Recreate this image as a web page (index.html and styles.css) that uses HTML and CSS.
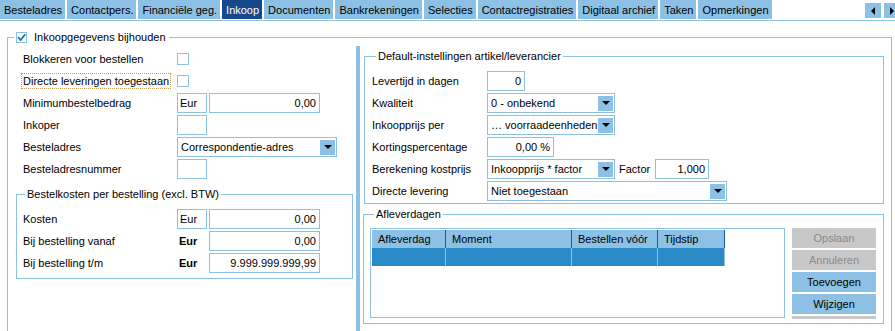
FILE: index.html
```html
<!DOCTYPE html>
<html>
<head>
  <title>Inkoop</title>
  <link rel="stylesheet" href="styles.css">
</head>
<body>

<div class="tabbar">
  <div class="tab">Besteladres</div>
  <div class="tab">Contactpers.</div>
  <div class="tab">Financiële geg.</div>
  <div class="tab active">Inkoop</div>
  <div class="tab">Documenten</div>
  <div class="tab">Bankrekeningen</div>
  <div class="tab">Selecties</div>
  <div class="tab">Contactregistraties</div>
  <div class="tab">Digitaal archief</div>
  <div class="tab">Taken</div>
  <div class="tab">Opmerkingen</div>
  <div class="tab-nav">
    <span class="nav-btn"><i class="tri-left"></i></span>
    <span class="nav-btn"><i class="tri-right"></i></span>
  </div>
</div>

<fieldset class="frame">
  <legend class="frame-title">
    <span class="check">
      <svg width="9" height="9" viewBox="0 0 9 9"><path d="M1 4.2 L3.6 7 L8.2 1.2" fill="none" stroke="#1f6fb5" stroke-width="1.8"/></svg>
    </span>
    Inkoopgegevens bijhouden
  </legend>

  <div class="panes">
    <div class="pane-left">
      <div class="form">
        <div class="row">
          <span class="label">Blokkeren voor bestellen</span>
          <span class="box"></span>
        </div>
        <div class="row">
          <span class="label"><span class="focus">Directe leveringen toegestaan</span></span>
          <span class="box"></span>
        </div>
        <div class="row">
          <span class="label">Minimumbestelbedrag</span>
          <div class="field cur">Eur</div>
          <div class="field num amount">0,00</div>
        </div>
        <div class="row">
          <span class="label">Inkoper</span>
          <div class="field cur"></div>
        </div>
        <div class="row">
          <span class="label">Besteladres</span>
          <div class="select w-160"><span class="select-text">Correspondentie-adres</span><span class="select-btn"><i class="tri-down"></i></span></div>
        </div>
        <div class="row">
          <span class="label">Besteladresnummer</span>
          <div class="field cur"></div>
        </div>
      </div>

      <fieldset class="group costs">
        <legend>Bestelkosten per bestelling (excl. BTW)</legend>
        <div class="form">
          <div class="row">
            <span class="label">Kosten</span>
            <div class="field cur">Eur</div>
            <div class="field num amount">0,00</div>
          </div>
          <div class="row">
            <span class="label">Bij bestelling vanaf</span>
            <span class="cur-bold">Eur</span>
            <div class="field num amount">0,00</div>
          </div>
          <div class="row">
            <span class="label">Bij bestelling t/m</span>
            <span class="cur-bold">Eur</span>
            <div class="field num amount">9.999.999.999,99</div>
          </div>
        </div>
      </fieldset>
    </div>

    <div class="splitter"></div>

    <div class="pane-right">
      <fieldset class="group defaults">
        <legend>Default-instellingen artikel/leverancier</legend>
        <div class="form">
          <div class="row">
            <span class="label">Levertijd in dagen</span>
            <div class="field num w-38">0</div>
          </div>
          <div class="row">
            <span class="label">Kwaliteit</span>
            <div class="select w-128"><span class="select-text">0 - onbekend</span><span class="select-btn"><i class="tri-down"></i></span></div>
          </div>
          <div class="row">
            <span class="label">Inkoopprijs per</span>
            <div class="select w-128"><span class="select-text">… voorraadeenheden</span><span class="select-btn"><i class="tri-down"></i></span></div>
          </div>
          <div class="row">
            <span class="label">Kortingspercentage</span>
            <div class="field num w-67">0,00 %</div>
          </div>
          <div class="row">
            <span class="label">Berekening kostprijs</span>
            <div class="select w-128"><span class="select-text">Inkoopprijs * factor</span><span class="select-btn"><i class="tri-down"></i></span></div>
            <span class="factor">Factor</span>
            <div class="field num w-54">1,000</div>
          </div>
          <div class="row">
            <span class="label">Directe levering</span>
            <div class="select w-240"><span class="select-text">Niet toegestaan</span><span class="select-btn"><i class="tri-down"></i></span></div>
          </div>
        </div>
      </fieldset>

      <fieldset class="group days">
        <legend>Afleverdagen</legend>
        <div class="days-body">
          <div class="grid">
            <div class="grid-head">
              <span class="c1">Afleverdag</span>
              <span class="c2">Moment</span>
              <span class="c3">Bestellen vóór</span>
              <span class="c4">Tijdstip</span>
            </div>
            <div class="grid-row">
              <span class="c1"></span>
              <span class="c2"></span>
              <span class="c3"></span>
              <span class="c4"></span>
            </div>
          </div>
          <div class="buttons">
            <div class="btn disabled">Opslaan</div>
            <div class="btn disabled">Annuleren</div>
            <div class="btn">Toevoegen</div>
            <div class="btn">Wijzigen</div>
            <div class="btn disabled"></div>
          </div>
        </div>
      </fieldset>
    </div>
  </div>
</fieldset>

</body>
</html>
```

FILE: styles.css
```css
* {
  box-sizing: border-box;
}
html, body {
  margin: 0;
  height: 331px;
  overflow: hidden;
}
body {
  font-family: "Liberation Sans", Arial, sans-serif;
  font-size: 11px;
  color: #000;
  background: #fff;
}

/* tabs */
.tabbar {
  display: flex;
  height: 21px;
  border-bottom: 1px solid #8cc0e4;
  overflow: hidden;
}
.tab {
  height: 19px;
  line-height: 17px;
  padding: 2px 3px 0 4px;
  margin-right: 2px;
  background: #8cc0e4;
  white-space: nowrap;
}
.tab.active {
  background: #18488c;
  color: #fff;
}
.tab-nav {
  margin-left: auto;
  margin-right: -5px;
  display: flex;
  gap: 3px;
  padding-top: 3px;
}
.nav-btn {
  width: 16px;
  height: 15px;
  background: #8cc0e4;
  display: flex;
  align-items: center;
  justify-content: center;
}
.tri-left {
  border-right: 4px solid #000;
  border-top: 4px solid transparent;
  border-bottom: 4px solid transparent;
}
.tri-right {
  border-left: 4px solid #000;
  border-top: 4px solid transparent;
  border-bottom: 4px solid transparent;
}
.tri-down {
  border-top: 4px solid #000;
  border-left: 4px solid transparent;
  border-right: 4px solid transparent;
}

/* outer frame */
.frame {
  margin: 9px 3px 0 7px;
  padding: 0;
  border: 1px solid #8cc0e4;
  height: 320px;
  min-width: 0;
}
.frame-title {
  margin-left: 6px;
  padding: 0 3px 0 2px;
  line-height: 14px;
  display: flex;
  align-items: center;
}
.check {
  width: 11px;
  height: 11px;
  border: 1px solid #8cc0e4;
  margin-right: 7px;
  display: flex;
  align-items: center;
  justify-content: center;
}
.panes {
  display: flex;
  margin-top: 2px;
  height: 300px;
}
.pane-left {
  width: 348px;
}
.splitter {
  width: 4px;
  background: #8cc0e4;
}
.pane-right {
  flex: 1;
}

/* form rows */
.form {
  display: flex;
  flex-direction: column;
  gap: 2px;
}
.pane-left > .form {
  margin: 3px 0 0 15px;
}
.row {
  display: flex;
  align-items: center;
  height: 20px;
}
.label {
  width: 154px;
  flex-shrink: 0;
  white-space: nowrap;
}
.defaults .label {
  width: 115px;
}
.focus {
  display: inline-block;
  margin-left: -2px;
  padding: 0 1px;
  line-height: 14px;
  border: 1px dotted #c99a5c;
}
.box {
  width: 12px;
  height: 12px;
  border: 1px solid #8cc0e4;
}
.field {
  height: 20px;
  line-height: 18px;
  border: 1px solid #8cc0e4;
  padding: 0 3px;
  background: #fff;
  white-space: nowrap;
  overflow: hidden;
}
.field.num {
  text-align: right;
}
.cur {
  width: 30px;
  margin-right: 2px;
  padding-left: 2px;
}
.amount {
  width: 111px;
}
.cur-bold {
  width: 32px;
  padding-left: 2px;
  font-weight: bold;
}
.w-38 { width: 38px; }
.w-54 { width: 54px; }
.w-67 { width: 67px; }
.w-128 { width: 128px; }
.w-160 { width: 160px; }
.w-240 { width: 240px; }

.select {
  height: 20px;
  border: 1px solid #8cc0e4;
  display: flex;
  align-items: center;
  padding-left: 3px;
}
.select-text {
  flex: 1;
  overflow: hidden;
  white-space: nowrap;
}
.select-btn {
  width: 15px;
  height: 15px;
  margin-right: 1px;
  flex-shrink: 0;
  background: #8cc0e4;
  display: flex;
  align-items: center;
  justify-content: center;
}
.factor {
  width: 40px;
  padding-left: 4px;
}

/* group boxes */
.group {
  border: 1px solid #8cc0e4;
  padding: 0;
  min-width: 0;
}
.group legend {
  padding: 0 2px;
  line-height: 13px;
}
.costs {
  margin: 9px 3px 0 8px;
  padding: 8px 0 5px 6px;
}
.costs legend {
  margin-left: 2px;
}
.defaults {
  margin: 4px 7px 0 4px;
  padding: 8px 0 2px 7px;
}
.defaults legend,
.days legend {
  margin-left: 4px;
}
.days {
  margin: 4px 7px 0 3px;
  padding: 7px 6px 4px 6px;
}
.days-body {
  display: flex;
  align-items: flex-start;
}

/* grid */
.grid {
  width: 415px;
  height: 90px;
  border: 1px solid #8cc0e4;
  padding: 1px;
}
.grid-head,
.grid-row {
  display: flex;
  height: 18px;
  line-height: 18px;
}
.grid-head span {
  background: #8cc0e4;
  border-right: 1px solid #1a5a9c;
  padding-left: 6px;
}
.grid-row span {
  background: #2a8ac8;
  border-right: 1px solid #8cc0e4;
}
.c1 { width: 74px; }
.c2 { width: 126px; }
.c3 { width: 86px; }
.c4 { width: 67px; }

.buttons {
  width: 84px;
  height: 91px;
  margin-left: 7px;
  overflow: hidden;
}
.btn {
  height: 20px;
  line-height: 20px;
  margin-bottom: 2px;
  text-align: center;
  background: #8cc0e4;
}
.btn.disabled {
  background: #c8c8c8;
  color: #8a8a8a;
}
```
